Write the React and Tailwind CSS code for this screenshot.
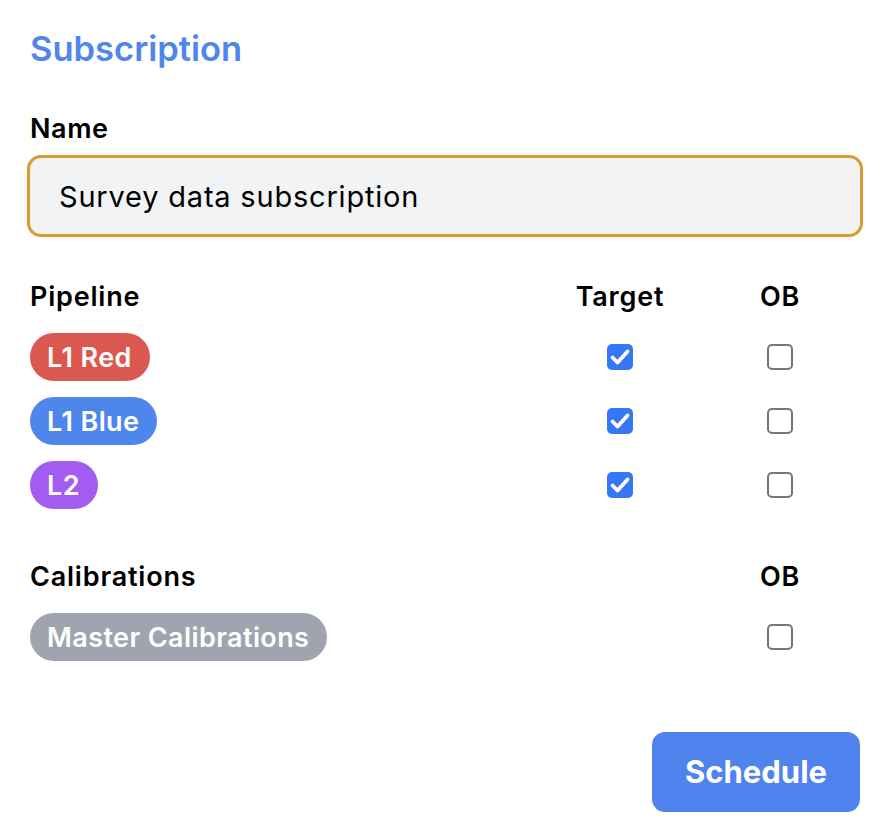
import React from 'react';

const pipelines = [
  { name: 'L1 Red', color: 'bg-[#DB5850]', target: true, ob: false },
  { name: 'L1 Blue', color: 'bg-[#4F86EC]', target: true, ob: false },
  { name: 'L2', color: 'bg-[#A35BF2]', target: true, ob: false },
];

// Pill shaped tag
const Pill = ({ label, color }) => (
  <span className={`inline-flex h-[48px] items-center rounded-full pl-[17px] pr-[18px] text-[27px] font-semibold leading-none tracking-[0.4px] text-white ${color}`}>
    {label}
  </span>
);

// Checkbox drawn by hand so it looks the same everywhere
const Check = ({ checked }) =>
  checked ? (
    <span className="flex h-[26px] w-[26px] items-center justify-center rounded-[5px] bg-[#3478F6]">
      <svg width="26" height="26" viewBox="0 0 26 26" fill="none">
        <path d="M5.5 13.5 L10.5 18.5 L20.5 7.5" stroke="white" strokeWidth="3.8" strokeLinecap="round" strokeLinejoin="round" />
      </svg>
    </span>
  ) : (
    <span className="block h-[26px] w-[26px] rounded-[5px] border-2 border-[#767676] bg-white" />
  );

const App = () => {
  return (
    <div className="h-[832px] w-[888px] bg-white pl-[30px] pr-[28px] pt-[29px] font-['Inter','Noto_Sans',sans-serif] text-black">
      <h1 className="text-[34.5px] font-semibold leading-[40px] text-[#4F86EC]">Subscription</h1>

      <label className="mt-[44px] block text-[27px] font-semibold leading-[32px] tracking-[0.6px]">Name</label>
      <input
        type="text"
        defaultValue="Survey data subscription"
        className="mt-[13px] block h-[76px] w-full rounded-[11px] bg-[#F2F3F5] px-[29px] text-[29px] tracking-[0.8px] text-black shadow-[0_0_0_3px_#D99A2E,0_3px_6px_rgba(0,0,0,0.06)] outline-none"
      />

      {/* Pipelines */}
      <div className="mt-[47px] grid grid-cols-[1fr_160px_160px] text-[27px] font-semibold leading-[32px] tracking-[0.8px]">
        <div>Pipeline</div>
        <div className="text-center">Target</div>
        <div className="text-center">OB</div>
      </div>
      <div className="mt-[20px] flex flex-col gap-[16px]">
        {pipelines.map((p) => (
          <div key={p.name} className="grid h-[48px] grid-cols-[1fr_160px_160px] items-center">
            <div>
              <Pill label={p.name} color={p.color} />
            </div>
            <div className="flex justify-center">
              <Check checked={p.target} />
            </div>
            <div className="flex justify-center">
              <Check checked={p.ob} />
            </div>
          </div>
        ))}
      </div>

      {/* Calibrations */}
      <div className="mt-[52px] grid grid-cols-[1fr_160px_160px] text-[27px] font-semibold leading-[32px] tracking-[0.8px]">
        <div>Calibrations</div>
        <div />
        <div className="text-center">OB</div>
      </div>
      <div className="mt-[20px] grid h-[48px] grid-cols-[1fr_160px_160px] items-center">
        <div>
          <Pill label="Master Calibrations" color="bg-[#A0A4AE]" />
        </div>
        <div />
        <div className="flex justify-center">
          <Check checked={false} />
        </div>
      </div>

      <div className="mt-[71px] flex justify-end">
        <button className="h-[80px] w-[208px] rounded-[13px] bg-[#4F83EE] text-[31px] font-bold text-white">
          Schedule
        </button>
      </div>
    </div>
  );
};

export default App;
